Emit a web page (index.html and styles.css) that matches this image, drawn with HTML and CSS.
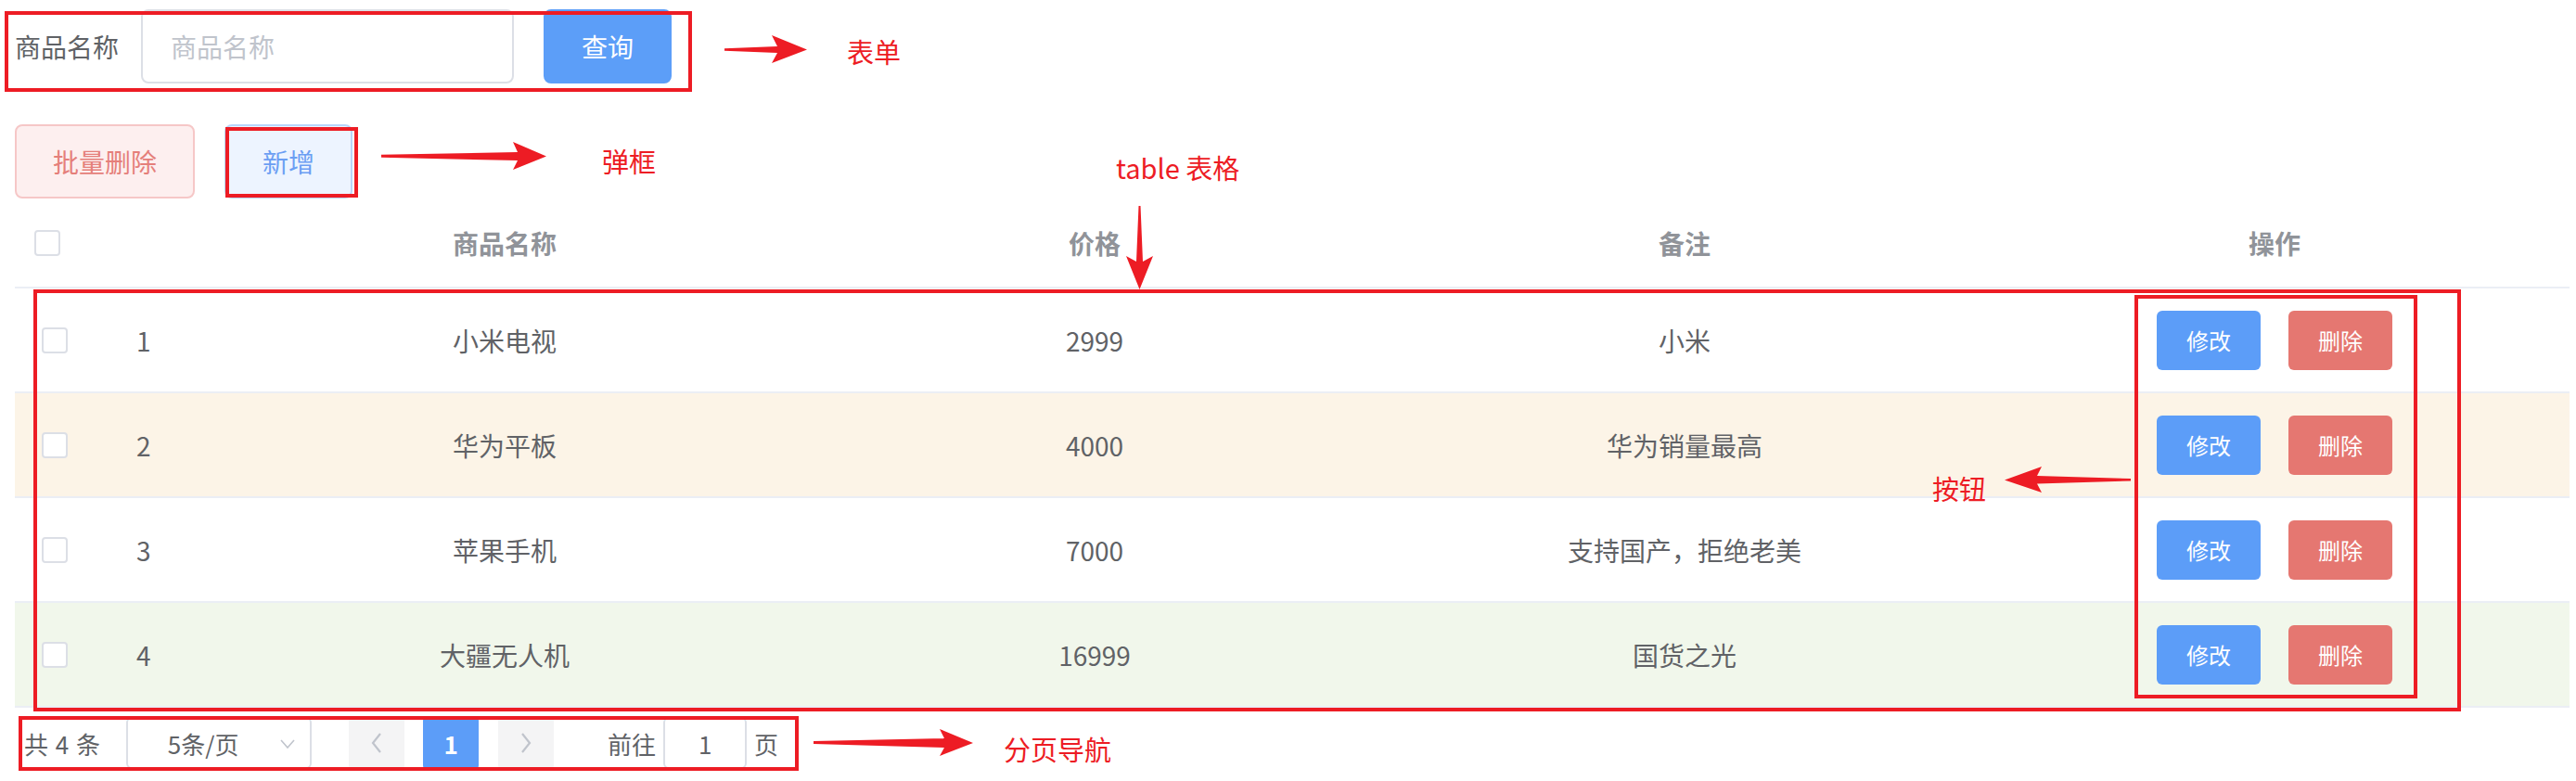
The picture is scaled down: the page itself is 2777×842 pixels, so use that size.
FILE: index.html
```html
<!DOCTYPE html>
<html lang="zh-CN">
<head>
<meta charset="utf-8">
<title>商品管理</title>
<link rel="stylesheet" href="styles.css">
</head>
<body>
<div class="page">
  <form class="search-form">
    <label class="form-label">商品名称</label>
    <input class="text-input" type="text" placeholder="商品名称">
    <button type="button" class="btn btn-primary btn-query">查询</button>
  </form>

  <div class="toolbar">
    <button type="button" class="btn btn-danger-plain">批量删除</button>
    <button type="button" class="btn btn-primary-plain btn-add">新增</button>
  </div>

  <div class="table">
    <div class="tr thead">
      <div class="td sel sel-head"><span class="checkbox"></span></div>
      <div class="td idx"></div>
      <div class="td">商品名称</div>
      <div class="td">价格</div>
      <div class="td">备注</div>
      <div class="td">操作</div>
    </div>
    <div class="tr">
      <div class="td sel"><span class="checkbox"></span></div>
      <div class="td idx">1</div>
      <div class="td">小米电视</div>
      <div class="td">2999</div>
      <div class="td">小米</div>
      <div class="td ops"><button type="button" class="btn-sm btn-edit">修改</button><button type="button" class="btn-sm btn-del">删除</button></div>
    </div>
    <div class="tr row-warning">
      <div class="td sel"><span class="checkbox"></span></div>
      <div class="td idx">2</div>
      <div class="td">华为平板</div>
      <div class="td">4000</div>
      <div class="td">华为销量最高</div>
      <div class="td ops"><button type="button" class="btn-sm btn-edit">修改</button><button type="button" class="btn-sm btn-del">删除</button></div>
    </div>
    <div class="tr">
      <div class="td sel"><span class="checkbox"></span></div>
      <div class="td idx">3</div>
      <div class="td">苹果手机</div>
      <div class="td">7000</div>
      <div class="td">支持国产，拒绝老美</div>
      <div class="td ops"><button type="button" class="btn-sm btn-edit">修改</button><button type="button" class="btn-sm btn-del">删除</button></div>
    </div>
    <div class="tr row-success">
      <div class="td sel"><span class="checkbox"></span></div>
      <div class="td idx">4</div>
      <div class="td">大疆无人机</div>
      <div class="td">16999</div>
      <div class="td">国货之光</div>
      <div class="td ops"><button type="button" class="btn-sm btn-edit">修改</button><button type="button" class="btn-sm btn-del">删除</button></div>
    </div>
  </div>

  <div class="pagination">
    <span class="total">共 4 条</span>
    <div class="sizes">
      <span class="sizes-text">5条/页</span>
      <svg class="sizes-arrow" width="16" height="10" viewBox="0 0 16 10"><polyline points="1,1 8,9 15,1" fill="none" stroke="#c0c4cc" stroke-width="1.6"/></svg>
    </div>
    <button type="button" class="pg-btn pg-prev"><svg width="12" height="22" viewBox="0 0 12 22"><polyline points="10,1 2,11 10,21" fill="none" stroke="#c0c4cc" stroke-width="2.2"/></svg></button>
    <button type="button" class="pg-btn pg-active">1</button>
    <button type="button" class="pg-btn pg-next"><svg width="12" height="22" viewBox="0 0 12 22"><polyline points="2,1 10,11 2,21" fill="none" stroke="#c0c4cc" stroke-width="2.2"/></svg></button>
    <span class="jumper">前往</span>
    <span class="jump-input">1</span>
    <span class="jumper-end">页</span>
  </div>
</div>

<div class="annotations">
  <div class="box box-form"></div>
  <div class="box box-add"></div>
  <div class="box box-table"></div>
  <div class="box box-ops"></div>
  <div class="box box-pager"></div>
  <span class="note note-form">表单</span>
  <span class="note note-dialog">弹框</span>
  <span class="note note-table">table 表格</span>
  <span class="note note-btn">按钮</span>
  <span class="note note-pager">分页导航</span>
  <svg class="arrows" width="2777" height="842" viewBox="0 0 2777 842">
    <polygon fill="#ed1c24" points="781,52.2 838,50 832,38 870,53.5 832,68 838,57 781,54.8"/>
    <polygon fill="#ed1c24" points="411,166.8 558,164 553,153 589,168.5 553,183 558,173 411,169.8"/>
    <polygon fill="#ed1c24" points="1227.5,222 1225,282 1214,276 1228.5,312 1243,276 1232,282 1229.5,222"/>
    <polygon fill="#ed1c24" points="2297,516 2196,513 2201,503 2161,517.5 2201,531 2196,521.5 2297,518.5"/>
    <polygon fill="#ed1c24" points="877,799 1018,796 1013,786 1049,801 1013,815 1018,806 877,802"/>
  </svg>
</div>
</body>
</html>
```

FILE: styles.css
```css
* {
  box-sizing: border-box;
}

html, body {
  margin: 0;
  padding: 0;
  background: #ffffff;
}

body {
  position: relative;
  width: 2777px;
  height: 842px;
  overflow: hidden;
  font-family: "Noto Sans CJK SC", "Microsoft YaHei", sans-serif;
  color: #606266;
}

.page {
  padding-left: 16px;
}

/* ---------- search form ---------- */
.search-form {
  display: flex;
  align-items: center;
  height: 80px;
  margin: 10px 0 44px 0;
}

.form-label {
  font-size: 28px;
  color: #606266;
  padding-right: 24px;
  line-height: 80px;
}

.text-input {
  width: 402px;
  height: 80px;
  border: 2px solid #dcdfe6;
  border-radius: 8px;
  padding: 0 30px;
  font-family: inherit;
  font-size: 28px;
  color: #606266;
  outline: none;
  background: #fff;
}

.text-input::placeholder {
  color: #c0c4cc;
}

.btn {
  height: 80px;
  padding: 0 39px;
  border: 2px solid transparent;
  border-radius: 8px;
  font-family: inherit;
  font-size: 28px;
  line-height: 1;
  cursor: pointer;
}

.btn-primary {
  background: #5c9ef8;
  border-color: #5c9ef8;
  color: #ffffff;
}

.btn-query {
  margin-left: 32px;
}

/* ---------- toolbar ---------- */
.toolbar {
  display: flex;
  height: 80px;
}

.btn-danger-plain {
  background: #fdefef;
  border-color: #f6c7c7;
  color: #e57f7a;
}

.btn-primary-plain {
  background: #edf4ff;
  border-color: #b8d6fb;
  color: #6b9ef3;
}

.btn-add {
  margin-left: 32px;
}

/* ---------- table ---------- */
.table {
  width: 2754px;
}

.tr {
  display: grid;
  grid-template-columns: 110px 100px repeat(4, 1fr);
  height: 113px;
  border-bottom: 2px solid #ebeef5;
  background: #ffffff;
}

.thead {
  height: 97px;
  font-weight: bold;
  color: #909399;
}

.row-warning {
  background: #fcf4e7;
}

.row-success {
  background: #f1f7eb;
}

.td {
  display: flex;
  align-items: center;
  justify-content: center;
  font-size: 28px;
}

.td.sel {
  justify-content: flex-start;
  padding-left: 29px;
}

.td.sel-head {
  padding-left: 21px;
}

.td.idx {
  justify-content: flex-start;
  padding-left: 21px;
}

.checkbox {
  display: block;
  width: 28px;
  height: 28px;
  border: 2px solid #dcdfe6;
  border-radius: 4px;
  background: #ffffff;
}

.ops {
  gap: 30px;
}

.btn-sm {
  height: 64px;
  width: 112px;
  border: none;
  border-radius: 6px;
  font-family: inherit;
  font-size: 24px;
  color: #ffffff;
  padding: 0;
}

.btn-edit {
  background: #5c9df8;
}

.btn-del {
  background: #e57771;
}

/* ---------- pagination ---------- */
.pagination {
  display: flex;
  align-items: center;
  padding: 10px 10px;
  height: 76px;
  font-size: 26px;
  color: #606266;
}

.total {
  margin-right: 28px;
  word-spacing: 2px;
}

.sizes {
  position: relative;
  flex: none;
  width: 200px;
  height: 56px;
  border: 2px solid #dcdfe6;
  border-radius: 6px;
  display: flex;
  align-items: center;
  justify-content: center;
  padding-right: 34px;
  margin-right: 40px;
}

.sizes-arrow {
  position: absolute;
  right: 16px;
  top: 22px;
}

.pg-btn {
  flex: none;
  width: 60px;
  height: 56px;
  border: none;
  border-radius: 4px;
  background: #f4f4f5;
  display: flex;
  align-items: center;
  justify-content: center;
  padding: 0;
  font-family: inherit;
  font-size: 26px;
}

.pg-prev {
  margin-right: 20px;
}

.pg-active {
  background: #5c9df8;
  color: #ffffff;
  font-weight: bold;
  margin-right: 21px;
}

.jumper {
  margin-left: 58px;
}

.jump-input {
  flex: none;
  width: 90px;
  height: 56px;
  margin: 0 8px;
  border: 2px solid #dcdfe6;
  border-radius: 6px;
  display: flex;
  align-items: center;
  justify-content: center;
}

/* ---------- annotations (overlay) ---------- */
.annotations {
  position: absolute;
  left: 0;
  top: 0;
  width: 2777px;
  height: 842px;
  pointer-events: none;
}

.box {
  position: absolute;
  border: 4px solid #ed1c24;
}

.box-form {
  left: 5px;
  top: 12px;
  width: 741px;
  height: 87px;
}

.box-add {
  left: 243px;
  top: 137px;
  width: 143px;
  height: 76px;
}

.box-table {
  left: 36px;
  top: 312px;
  width: 2617px;
  height: 455px;
}

.box-ops {
  left: 2301px;
  top: 318px;
  width: 305px;
  height: 435px;
}

.box-pager {
  left: 20px;
  top: 772px;
  width: 841px;
  height: 59px;
}

.note {
  position: absolute;
  font-size: 29px;
  line-height: 30px;
  color: #ed1c24;
  white-space: nowrap;
}

.note-form {
  left: 913px;
  top: 40px;
}

.note-dialog {
  left: 649px;
  top: 158px;
}

.note-table {
  left: 1203px;
  top: 165px;
}

.note-btn {
  left: 2083px;
  top: 511px;
}

.note-pager {
  left: 1082px;
  top: 792px;
}

.arrows {
  position: absolute;
  left: 0;
  top: 0;
}
```
